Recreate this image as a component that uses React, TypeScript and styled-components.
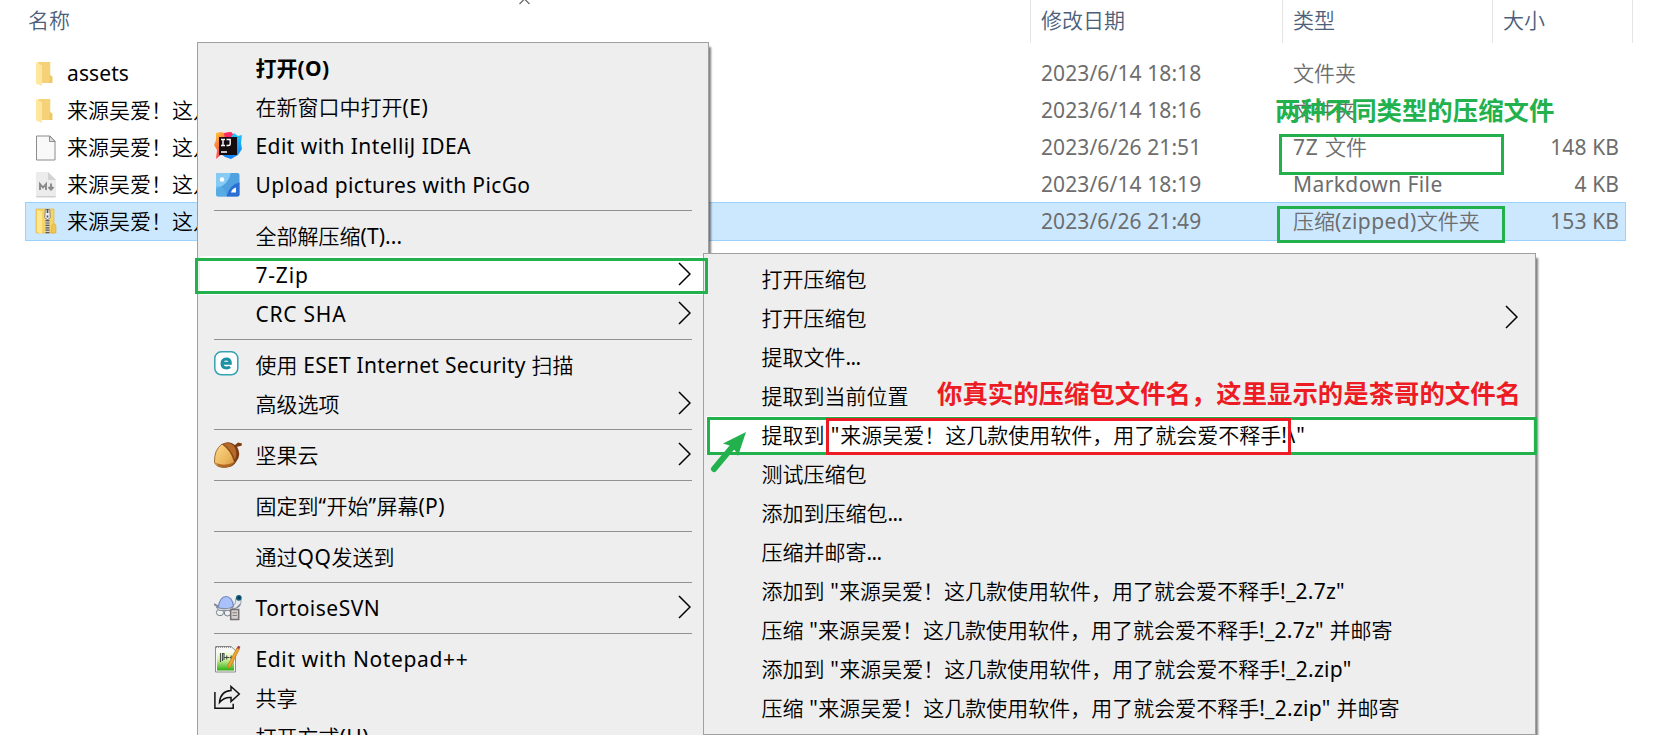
import React from "react";
import styled, { createGlobalStyle, css } from "styled-components";

const GlobalStyle = createGlobalStyle`
  *, *::before, *::after { box-sizing: border-box; }
  html, body { margin: 0; padding: 0; background: #fff; overflow: hidden; }
`;

const sans = `"Noto Sans", "Noto Sans CJK SC", sans-serif`;

const Desktop = styled.main`
  position: relative;
  width: 1669px;
  height: 735px;
  overflow: hidden;
  background: #fff;
  color: #000;
  font-family: ${sans};
  font-size: 21px;
  line-height: 30px;
`;

/* ---------- text ---------- */

const Text = styled.span<{ $bold?: boolean }>`
  white-space: pre;
  font-family: "Noto Sans CJK SC", sans-serif;
  font-weight: ${(p) => (p.$bold ? 700 : 350)};
`;

const Latin = styled.span<{ $track: number; $bold?: boolean }>`
  font-family: ${sans};
  font-weight: ${(p) => (p.$bold ? 700 : 400)};
  letter-spacing: ${(p) => p.$track}px;
`;

function Label({ text, track = 0, bold }: { text: string; track?: number; bold?: boolean }) {
  const runs = text.split(/([\u3000-\uffef]+)/).filter(Boolean);
  return (
    <Text $bold={bold}>
      {runs.map((run, i) =>
        /^[\u3000-\uffef]/.test(run) ? run : (
          <Latin key={i} $track={track} $bold={bold}>
            {run}
          </Latin>
        )
      )}
    </Text>
  );
}

/* ---------- file list ---------- */

const Header = styled.header`
  display: grid;
  grid-template-columns: 1005px 252px 210px 140px;
  margin-left: 26px;
  height: 43px;
  color: #4c607a;
`;

const HeaderCell = styled.div<{ $inset?: number }>`
  padding: 4px 0 0 ${(p) => p.$inset ?? 10}px;
  border-right: 1px solid #e5e5e5;
`;

const SortCaret = styled.svg`
  position: absolute;
  left: 517px;
  top: 0;
`;

const Rows = styled.div`
  padding: 12px 0 0 26px;
`;

const Row = styled.div<{ $selected?: boolean }>`
  display: grid;
  grid-template-columns: 1005px 252px 210px 132px;
  align-items: center;
  width: 1599px;
  height: 37px;
  padding-bottom: 3px;
  ${(p) =>
    p.$selected &&
    css`
      background: #cce8ff;
      outline: 1px solid #99d1ff;
    `}
`;

const NameCell = styled.div`
  display: flex;
  align-items: center;
  padding-left: 9px;
  gap: 10px;
  svg {
    flex: none;
    margin-top: 3px;
  }
`;

const MetaCell = styled.div`
  padding-left: 10px;
  color: #6d6d6d;
`;

const SizeCell = styled(MetaCell)`
  padding: 0 6px 0 0;
  text-align: right;
`;

/* ---------- context menus ---------- */

const Menu = styled.nav<{ $x: number; $y: number; $w: number; $h: number }>`
  position: absolute;
  left: ${(p) => p.$x}px;
  top: ${(p) => p.$y}px;
  width: ${(p) => p.$w}px;
  height: ${(p) => p.$h}px;
  padding: 6px 2px;
  background: #eee;
  border: 1px solid #a0a0a0;
  box-shadow: 3px 4px 2px -1px rgba(0, 0, 0, 0.5);
`;

const Item = styled.div<{ $active?: boolean }>`
  display: grid;
  grid-template-columns: 55.5px 1fr 13px;
  align-items: center;
  height: 39px;
  padding: 0 15px 3px 0;
  background: ${(p) => (p.$active ? "#fff" : "transparent")};
`;

const IconSlot = styled.span`
  display: flex;
  width: 28px;
  height: 28px;
  margin: 2px 0 0 14px;
`;

const Separator = styled.div`
  height: 12px;
  margin: 0 14px;
  padding-top: 5px;
  &::before {
    content: "";
    display: block;
    height: 1px;
    background: #919191;
  }
`;

function Chevron() {
  return (
    <svg width="13" height="24" viewBox="0 0 13 24" fill="none">
      <path d="M1 1l11 11L1 23" stroke="#000" strokeWidth="1.5" />
    </svg>
  );
}

/* ---------- annotations ---------- */

const Frame = styled.div<{ $x: number; $y: number; $w: number; $h: number; $color: string }>`
  position: absolute;
  left: ${(p) => p.$x}px;
  top: ${(p) => p.$y}px;
  width: ${(p) => p.$w}px;
  height: ${(p) => p.$h}px;
  border: 3px solid ${(p) => p.$color};
`;

const Note = styled.div<{ $x: number; $y: number; $color: string }>`
  position: absolute;
  left: ${(p) => p.$x}px;
  top: ${(p) => p.$y}px;
  color: ${(p) => p.$color};
  font: 700 25.4px/36px "Noto Sans CJK SC", sans-serif;
  white-space: nowrap;
`;

const Pointer = styled.svg`
  position: absolute;
  left: 705px;
  top: 428px;
`;

const green = "#22b14c";
const red = "#ed1c24";

/* ---------- icons ---------- */

const FolderIcon = () => (
  <svg width="22" height="26" viewBox="0 0 22 26">
    <path d="M3 1h12.300v13l2 2v6H5z" fill="#f5d277" />
    <path d="M14.500 14l2.800 1.500v6.500h-3z" fill="#eec769" />
    <path d="M1 1l6 3.500v20.500l-6-2.500z" fill="#ffe79f" />
  </svg>
);

const BlankFileIcon = () => (
  <svg width="22" height="26" viewBox="0 0 22 26">
    <path d="M1.500 1h13.500l5 5v19H1.500z" fill="#f9f9f9" stroke="#8c8c8c" />
    <path d="M14.500 1v5.500H20z" fill="#e2e2e2" stroke="#8c8c8c" />
  </svg>
);

const MarkdownIcon = () => (
  <svg width="22" height="27" viewBox="0 0 22 27">
    <path d="M2 1h11l8 8v15.500q0 1.500-1.500 1.500h-17Q1 26 1 24.500V2z" fill="#ececec" />
    <path d="M1 25h20v.5q-.5 1-1.500 1h-17Q1 26.500 1 25z" fill="#cfcfcf" />
    <path d="M13 1l8 8h-7q-1 0-1-1z" fill="#d2d2d2" />
    <path d="M5 19v-6l3 3.500 3-3.500v6M16 12.500v6M13.500 16l2.500 2.700 2.500-2.700" fill="none" stroke="#8a8a8a" strokeWidth="1.900" />
  </svg>
);

const ZipIcon = () => (
  <svg width="22" height="27" viewBox="0 0 22 27">
    <path d="M1 1h18v24H1z" fill="#f6d465" stroke="#e3b74c" strokeWidth=".7" />
    <path d="M2 2l5 2v22l-5-2z" fill="#ffe68f" />
    <path d="M17 17l2-1.500q2 .5 2 3V25h-5z" fill="#f0c552" stroke="#d9a83a" strokeWidth=".6" />
    <path d="M10 1h5v24h-5z" fill="#d6d3c4" />
    <path d="M12.500 12v14" stroke="#55585e" strokeWidth="4" strokeDasharray="1.200 1.200" />
    <path d="M10.300 1.500h4.400l.6 8q-2.800 4-5.600 0z" fill="#e9ebee" stroke="#7d8085" strokeWidth=".9" />
    <path d="M12.500 1v4M12.500 7.500v2" stroke="#4b4e55" strokeWidth="1.600" />
  </svg>
);

const IdeaIcon = () => (
  <svg width="28" height="28" viewBox="0 0 28 28">
    <defs>
      <linearGradient id="ideaA" x1="0" y1="0" x2="1" y2="1">
        <stop offset="0" stopColor="#ffd43e" />
        <stop offset=".35" stopColor="#fe7a3a" />
        <stop offset=".7" stopColor="#fc2f6d" />
        <stop offset="1" stopColor="#c34bdc" />
      </linearGradient>
      <linearGradient id="ideaB" x1="0" y1="0" x2="0" y2="1">
        <stop offset="0" stopColor="#22c9fb" />
        <stop offset="1" stopColor="#127df6" />
      </linearGradient>
    </defs>
    <path d="M2 1l5-1 3 1 7-1 4 6v17l-6 1-7-2-6 5 1-9-3-5 2-5z" fill="url(#ideaA)" />
    <path d="M10 1l7-1 5 5-2 3-9-1z" fill="#fb2a66" />
    <path d="M17 5l3-4 4 3 4-1-1 8 1 6-4 6-7 4-6-2-4-3 13-2z" fill="url(#ideaB)" />
    <path d="M5 5h18v18H5z" fill="#150c10" />
    <path d="M7 7.500h4M9 7.500v6M7 13.500h4M12.500 7.500h3.700v4.500q0 1.500-1.700 1.500h-2M7 20h6" fill="none" stroke="#fff" strokeWidth="1.400" />
  </svg>
);

const PicGoIcon = () => (
  <svg width="28" height="28" viewBox="0 0 28 28">
    <defs>
      <clipPath id="pg">
        <rect x="2" y="2" width="23.500" height="23.500" rx="2" />
      </clipPath>
    </defs>
    <g clipPath="url(#pg)">
      <path d="M0 0h28v28H0z" fill="#4fa2df" />
      <path d="M0 0h17Q16 13 2 18H0z" fill="#86cbf3" />
      <path d="M28 11Q14 13 12 28h16z" fill="#2c6fd4" />
      <path d="M0 17q5-3 8-1 5 5 4 12H0z" fill="#5cb0e6" opacity=".7" />
      <circle cx="8" cy="8.500" r="2.300" fill="#fff" />
      <path d="M17 21.500q1-4 5-5v5z" fill="#fff" />
    </g>
  </svg>
);

const EsetIcon = () => (
  <svg width="28" height="28" viewBox="0 0 28 28">
    <rect x=".8" y=".8" width="23" height="23" rx="6.500" fill="#fff" stroke="#35a3b2" strokeWidth="1.500" />
    <path d="M8.500 12.300h7.800q0-4.200-4.000-4.200-4.300 0-4.300 4.400t4.500 4.400q2.200 0 3.600-1" fill="none" stroke="#1d91a3" strokeWidth="3" />
  </svg>
);

const AcornIcon = () => (
  <svg width="28" height="28" viewBox="0 0 28 28">
    <defs>
      <linearGradient id="nut" x1="0" y1="0" x2="1" y2="1">
        <stop offset="0" stopColor="#ffd98c" />
        <stop offset=".65" stopColor="#eab55b" />
        <stop offset="1" stopColor="#c98a38" />
      </linearGradient>
    </defs>
    <path d="M8 3Q15-1 21 4l3-2.500 4 1-.5 2.300-4.500 1Q28 14 22 21q-3 5-8 5z" fill="#7a3b12" />
    <path d="M8 3Q0 9 .5 21q1 5 9.500 5.500 7 0 10.500-5.500Q17 9 8 3z" fill="url(#nut)" stroke="#8d4e18" strokeWidth=".8" />
    <path d="M9 3q7-2.500 11 2 4 6 1 14Q17 8 9 3z" fill="#b56a2a" />
    <path d="M2 22q9 4 18.500-1Q17 26 10 26.500 4 26 2 22z" fill="#b06722" />
  </svg>
);

const TortoiseIcon = () => (
  <svg width="28" height="28" viewBox="0 0 28 28">
    <path d="M0 10l5 3M18 14q7 0 8-4" fill="none" stroke="#7f8794" strokeWidth="2" />
    <path d="M18 11l3-1 1-6 5 1 0 4-5 5-5 1z" fill="#e3e8ec" stroke="#8b929b" strokeWidth=".8" />
    <circle cx="24.800" cy="3.800" r="2.900" fill="#15607f" />
    <circle cx="25.200" cy="3.800" r="1.300" fill="#062e48" />
    <ellipse cx="6" cy="18.500" rx="3.600" ry="3.200" fill="#eef0f2" stroke="#777f8a" />
    <ellipse cx="13.500" cy="19" rx="3.200" ry="3" fill="#eef0f2" stroke="#777f8a" />
    <path d="M4 14Q6 2.500 12 2.500T19.500 12l-4 3z" fill="#a9c2fb" stroke="#7186bb" strokeWidth="1.200" />
    <path d="M2 13q8 3.500 17 0l-2 3.500H5z" fill="#ced5dd" stroke="#7e858f" strokeWidth=".8" />
    <path d="M16.700 15.500h8v10h-8z" fill="#d2d0ce" stroke="#767170" strokeWidth="1.500" />
    <path d="M18.500 18.700h4.500M18.500 21.500h4.500" stroke="#837d7b" strokeWidth="1.100" />
  </svg>
);

const NotepadIcon = () => (
  <svg width="28" height="28" viewBox="0 0 28 28">
    <defs>
      <linearGradient id="npp" x1="0" y1="0" x2="0" y2="1">
        <stop offset="0" stopColor="#fff" />
        <stop offset=".45" stopColor="#d7f3a0" />
        <stop offset="1" stopColor="#2fae14" />
      </linearGradient>
    </defs>
    <path d="M1.500 1.500H17l4.500 4V27h-20z" fill="#f6f6f6" stroke="#8b8f8b" />
    <path d="M3 5h17v20.500H3z" fill="url(#npp)" />
    <path d="M2 2h15" stroke="#777" strokeWidth="1.600" strokeDasharray="1 1" />
    <path d="M6.500 8v9M8.500 16V8.500h1.500V15M10.500 12.500h4.500M12.700 10.500v4M15.500 12.500h3.500M17.200 10.500v4" fill="none" stroke="#46504a" strokeWidth="1.100" />
    <path d="M22.800 3l2.500 1.200-8.500 17-3 2.200.4-3.800z" fill="#f3a52c" stroke="#b97818" strokeWidth=".7" />
    <path d="M22.800 3l1.400-2.200 2.200 1-1.100 2.400z" fill="#a63a48" />
  </svg>
);

const ShareIcon = () => (
  <svg width="28" height="28" viewBox="0 0 28 28" fill="none" stroke="#111" strokeWidth="1.500">
    <path d="M.9 8v16.200h18.300v-4.500" />
    <path d="M17 2.500l8.300 7.500L17 17.500v-4q-7-.5-11.500 5Q6.500 7 17 6.500z" strokeLinejoin="miter" />
  </svg>
);

/* ---------- data ---------- */

type FileRow = {
  icon: React.ReactNode;
  name: string;
  date: string;
  type: string;
  typeTrack?: number;
  size?: string;
  selected?: boolean;
};

const files: FileRow[] = [
  { icon: <FolderIcon />, name: "assets", date: "2023/6/14 18:18", type: "文件夹" },
  { icon: <FolderIcon />, name: "来源吴爱！这几款", date: "2023/6/14 18:16", type: "文件夹" },
  { icon: <BlankFileIcon />, name: "来源吴爱！这几款", date: "2023/6/26 21:51", type: "7Z 文件", typeTrack: 0.8, size: "148 KB" },
  { icon: <MarkdownIcon />, name: "来源吴爱！这几款", date: "2023/6/14 18:19", type: "Markdown File", typeTrack: 0.4, size: "4 KB" },
  { icon: <ZipIcon />, name: "来源吴爱！这几款", date: "2023/6/26 21:49", type: "压缩(zipped)文件夹", typeTrack: 0.42, size: "153 KB", selected: true },
];

type MenuEntry =
  | { text: string; icon?: React.ReactNode; arrow?: boolean; active?: boolean; bold?: boolean; track?: number }
  | "separator";

const mainMenu: MenuEntry[] = [
  { text: "打开(O)", bold: true, track: 0.4 },
  { text: "在新窗口中打开(E)", track: 0.5 },
  { text: "Edit with IntelliJ IDEA", icon: <IdeaIcon />, track: 0.43 },
  { text: "Upload pictures with PicGo", icon: <PicGoIcon />, track: 0.37 },
  "separator",
  { text: "全部解压缩(T)...", track: 0.1 },
  { text: "7-Zip", arrow: true, active: true, track: 0.8 },
  { text: "CRC SHA", arrow: true, track: 0.75 },
  "separator",
  { text: "使用 ESET Internet Security 扫描", icon: <EsetIcon />, track: 0.26 },
  { text: "高级选项", arrow: true },
  "separator",
  { text: "坚果云", icon: <AcornIcon />, arrow: true },
  "separator",
  { text: "固定到“开始”屏幕(P)", track: 0.4 },
  "separator",
  { text: "通过QQ发送到", track: 0.6 },
  "separator",
  { text: "TortoiseSVN", icon: <TortoiseIcon />, arrow: true, track: 0.5 },
  "separator",
  { text: "Edit with Notepad++", icon: <NotepadIcon />, track: 0.64 },
  { text: "共享", icon: <ShareIcon /> },
  { text: "打开方式(H)", track: 0.4 },
];

const archive = "来源吴爱！这几款使用软件，用了就会爱不释手!";

const zipMenu: MenuEntry[] = [
  { text: "打开压缩包" },
  { text: "打开压缩包", arrow: true },
  { text: "提取文件...", track: -0.6 },
  { text: "提取到当前位置" },
  { text: `提取到 "${archive}\\"`, active: true, track: 0.8 },
  { text: "测试压缩包" },
  { text: "添加到压缩包...", track: -0.6 },
  { text: "压缩并邮寄...", track: -0.6 },
  { text: `添加到 "${archive}_2.7z"`, track: 0.25 },
  { text: `压缩 "${archive}_2.7z" 并邮寄`, track: 0.25 },
  { text: `添加到 "${archive}_2.zip"`, track: 0.3 },
  { text: `压缩 "${archive}_2.zip" 并邮寄`, track: 0.3 },
];

function Entries({ entries }: { entries: MenuEntry[] }) {
  return (
    <>
      {entries.map((entry, i) =>
        entry === "separator" ? (
          <Separator key={i} />
        ) : (
          <Item key={i} $active={entry.active}>
            <IconSlot>{entry.icon}</IconSlot>
            <Label text={entry.text} bold={entry.bold} track={entry.track} />
            {entry.arrow && <Chevron />}
          </Item>
        )
      )}
    </>
  );
}

export default function App() {
  return (
    <Desktop>
      <GlobalStyle />
      <Header>
        <HeaderCell $inset={2}><Label text="名称" /></HeaderCell>
        <HeaderCell><Label text="修改日期" /></HeaderCell>
        <HeaderCell><Label text="类型" /></HeaderCell>
        <HeaderCell><Label text="大小" /></HeaderCell>
      </Header>
      <SortCaret width="14" height="5" viewBox="0 0 14 5" fill="none">
        <path d="M2.500 4l5-5 5 5" stroke="#6d6d6d" strokeWidth="1.300" />
      </SortCaret>
      <Rows>
        {files.map((f) => (
          <Row key={f.date} $selected={f.selected}>
            <NameCell>{f.icon}<Label text={f.name} track={0.1} /></NameCell>
            <MetaCell><Label text={f.date} track={0.1} /></MetaCell>
            <MetaCell><Label text={f.type} track={f.typeTrack} /></MetaCell>
            <SizeCell>{f.size && <Label text={f.size} track={0.1} />}</SizeCell>
          </Row>
        ))}
      </Rows>

      <Menu $x={197} $y={42} $w={512} $h={760}>
        <Entries entries={mainMenu} />
      </Menu>
      <Menu $x={703} $y={253} $w={833} $h={482}>
        <Entries entries={zipMenu} />
      </Menu>

      <Frame $x={195} $y={258} $w={513} $h={36} $color={green} />
      <Frame $x={1279} $y={134} $w={225} $h={41} $color={green} />
      <Frame $x={1277} $y={206} $w={228} $h={37} $color={green} />
      <Frame $x={707} $y={417} $w={830} $h={38} $color={green} />
      <Frame $x={826} $y={418} $w={465} $h={37} $color={red} />
      <Note $x={1275} $y={91} $color={green}>两种不同类型的压缩文件</Note>
      <Note $x={937} $y={374} $color={red}>你真实的压缩包文件名，这里显示的是茶哥的文件名</Note>
      <Pointer width="45" height="48" viewBox="0 0 45 48">
        <path d="M9 41L29 17" stroke={green} strokeWidth="6" strokeLinecap="round" />
        <path d="M41 4L18 15.500l6.500 2 5.500 5 3 5.500z" fill={green} />
      </Pointer>
    </Desktop>
  );
}
